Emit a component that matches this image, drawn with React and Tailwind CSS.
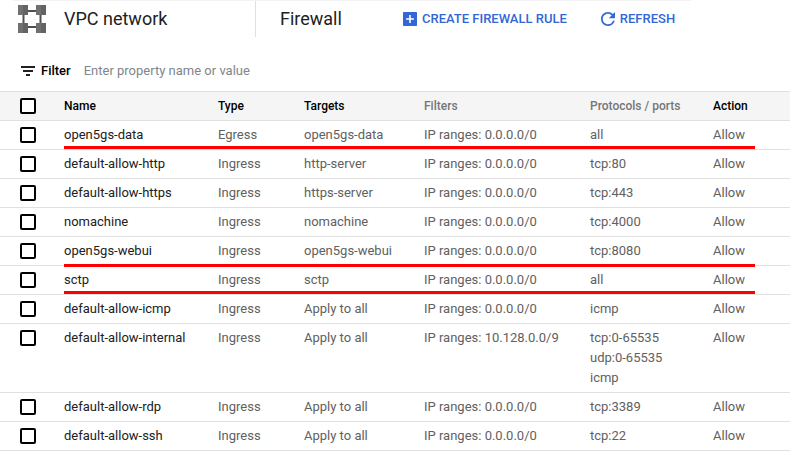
const columns = [
  { label: 'Name', width: 'w-[154px]', sortable: true },
  { label: 'Type', width: 'w-[86px]', sortable: true },
  { label: 'Targets', width: 'w-[120px]', sortable: true },
  { label: 'Filters', width: 'w-[166px]', sortable: false },
  { label: 'Protocols / ports', width: 'w-[123px]', sortable: false },
  { label: 'Action', width: '', sortable: true },
]

const rules = [
  { name: 'open5gs-data', type: 'Egress', targets: 'open5gs-data', range: '0.0.0.0/0', ports: ['all'], mark: 'bottom-px' },
  { name: 'default-allow-http', type: 'Ingress', targets: 'http-server', range: '0.0.0.0/0', ports: ['tcp:80'] },
  { name: 'default-allow-https', type: 'Ingress', targets: 'https-server', range: '0.0.0.0/0', ports: ['tcp:443'] },
  { name: 'nomachine', type: 'Ingress', targets: 'nomachine', range: '0.0.0.0/0', ports: ['tcp:4000'] },
  { name: 'open5gs-webui', type: 'Ingress', targets: 'open5gs-webui', range: '0.0.0.0/0', ports: ['tcp:8080'], mark: '-bottom-px' },
  { name: 'sctp', type: 'Ingress', targets: 'sctp', range: '0.0.0.0/0', ports: ['all'], mark: 'bottom-px' },
  { name: 'default-allow-icmp', type: 'Ingress', targets: 'Apply to all', range: '0.0.0.0/0', ports: ['icmp'] },
  { name: 'default-allow-internal', type: 'Ingress', targets: 'Apply to all', range: '10.128.0.0/9', ports: ['tcp:0-65535', 'udp:0-65535', 'icmp'] },
  { name: 'default-allow-rdp', type: 'Ingress', targets: 'Apply to all', range: '0.0.0.0/0', ports: ['tcp:3389'] },
  { name: 'default-allow-ssh', type: 'Ingress', targets: 'Apply to all', range: '0.0.0.0/0', ports: ['tcp:22'] },
]

function NetworkIcon() {
  return (
    <svg viewBox="0 0 28 28" className="h-7 w-7 shrink-0" aria-hidden="true">
      <path d="M5.5 6h17v16h-17z" fill="none" stroke="#505050" strokeWidth="2" />
      <path d="M0 0h10v10H0zM18 0h10v10H18zM0 18h10v10H0zM18 18h10v10H18z" fill="#707070" />
      <path d="M5 0h5v10H5zM23 0h5v10h-5zM5 18h5v10H5zM23 18h5v10h-5z" fill="#636363" />
    </svg>
  )
}

function AddBoxIcon() {
  return (
    <svg viewBox="3 3 18 18" className="h-3.5 w-3.5" fill="currentColor" aria-hidden="true">
      <path d="M20 3H4a1 1 0 0 0-1 1v16a1 1 0 0 0 1 1h16a1 1 0 0 0 1-1V4a1 1 0 0 0-1-1zm-3 10h-4v4h-2v-4H7v-2h4V7h2v4h4v2z" />
    </svg>
  )
}

function RefreshIcon() {
  return (
    <svg viewBox="4 4 16 16" className="h-3.5 w-3.5" fill="currentColor" aria-hidden="true">
      <path d="M17.65 6.35A7.958 7.958 0 0 0 12 4c-4.42 0-7.99 3.58-7.99 8s3.57 8 7.99 8c3.73 0 6.84-2.55 7.73-6h-2.08A5.99 5.99 0 0 1 12 18c-3.31 0-6-2.69-6-6s2.69-6 6-6c1.66 0 3.14.69 4.22 1.78L13 11h7V4l-2.35 2.35z" />
    </svg>
  )
}

function FilterIcon() {
  return (
    <svg viewBox="0 0 14 10" className="h-2.5 w-3.5" fill="#212121" aria-hidden="true">
      <path d="M0 0h14v2H0zM2 4h10v2H2zM5 8h4v2H5z" />
    </svg>
  )
}

function Checkbox({ label }) {
  return (
    <input
      type="checkbox"
      aria-label={label}
      className="my-0.5 block h-4 w-4 appearance-none rounded-xs border-2 border-black bg-white checked:bg-black"
    />
  )
}

export default function App() {
  return (
    <div className="min-h-screen bg-white font-['Roboto',sans-serif] text-[13px] leading-5 text-[#212121]">
      {/* Page header */}
      <header className="mr-[102px] ml-[13px] flex h-[37px] items-center border-t border-[#f3f3f3]">
        <div className="flex h-full w-[242px] shrink-0 items-center gap-[18px] pl-[5px]">
          <NetworkIcon />
          <h2 className="text-lg">VPC network</h2>
        </div>
        <div className="h-full w-px shrink-0 bg-[#e0e0e0]" />
        <h1 className="w-[124px] shrink-0 pl-6 text-lg">Firewall</h1>
        <div className="flex items-center gap-[34px] pl-[23px] font-medium whitespace-nowrap text-[#3367d6]">
          <button type="button" className="flex items-center gap-[5px]">
            <AddBoxIcon />
            CREATE FIREWALL RULE
          </button>
          <button type="button" className="flex items-center gap-[5px]">
            <RefreshIcon />
            REFRESH
          </button>
        </div>
      </header>

      {/* Filter bar */}
      <div className="mt-3.5 flex h-10 items-center pl-[21px]">
        <FilterIcon />
        <label htmlFor="rule-filter" className="pl-1.5 font-medium text-black">
          Filter
        </label>
        <input
          id="rule-filter"
          type="text"
          placeholder="Enter property name or value"
          className="ml-[13px] flex-1 outline-none placeholder:text-[#80868b]"
        />
      </div>

      {/* Rules table */}
      <div className="pr-[3px]">
        <table className="w-full table-fixed border-separate border-spacing-0 text-left">
          <thead>
            <tr className="bg-[#f5f5f5] text-xs leading-5">
              <th className="w-16 border-y border-[#e0e0e0] py-1 pl-5">
                <Checkbox label="Select all rules" />
              </th>
              {columns.map((col) => (
                <th
                  key={col.label}
                  className={`border-y border-[#e0e0e0] py-1 font-medium whitespace-nowrap ${col.width} ${col.sortable ? 'text-black' : 'text-[#757575]'}`}
                >
                  {col.label}
                </th>
              ))}
            </tr>
          </thead>
          <tbody className="align-top text-[#616161]">
            {rules.map((rule) => (
              <tr key={rule.name} className="relative">
                <td className="border-b border-[#e0e0e0] py-1 pl-5">
                  <Checkbox label={`Select ${rule.name}`} />
                </td>
                <td className="border-b border-[#e0e0e0] py-1 whitespace-nowrap text-[#212121]">
                  {rule.name}
                  {rule.mark && <span className={`absolute right-[35px] left-16 h-[3px] bg-[#ff0000] ${rule.mark}`} />}
                </td>
                <td className="border-b border-[#e0e0e0] py-1">{rule.type}</td>
                <td className="border-b border-[#e0e0e0] py-1">{rule.targets}</td>
                <td className="border-b border-[#e0e0e0] py-1">IP ranges: {rule.range}</td>
                <td className="border-b border-[#e0e0e0] py-1">
                  {rule.ports.map((port) => (
                    <div key={port}>{port}</div>
                  ))}
                </td>
                <td className="border-b border-[#e0e0e0] py-1">Allow</td>
              </tr>
            ))}
          </tbody>
        </table>
      </div>
    </div>
  )
}
